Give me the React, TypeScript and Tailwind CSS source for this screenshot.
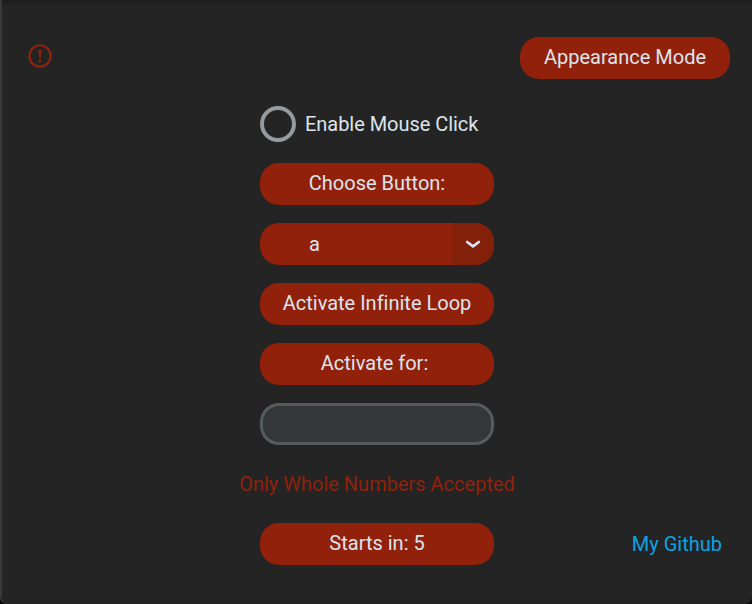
import React from "react";

const pill =
  "flex h-[42px] w-[234px] items-center justify-center rounded-[19px] bg-[#91210a] text-[#dce4ee]";

function PillButton({ children }: { children: React.ReactNode }) {
  return (
    <button type="button" className={pill}>
      <span className="-mt-0.5 whitespace-pre">{children}</span>
    </button>
  );
}

function WarningIcon() {
  return (
    <svg width="24" height="24" viewBox="0 0 24 24" fill="none" stroke="#9c230b">
      <circle cx="12" cy="12" r="10.6" strokeWidth="1.9" />
      <path d="M10.5 5.8h3l-.8 8.6h-1.4z" fill="#91210a" stroke="none" />
      <circle cx="12" cy="17.2" r="1.35" fill="#91210a" stroke="none" />
    </svg>
  );
}

export default function App() {
  return (
    <div className="h-[604px] w-[752px] overflow-hidden bg-[#080808]">
      <main className="flex h-full w-full justify-between rounded-b-[7px] border-l-2 border-[#3a3a3a] bg-[#242424] font-['Roboto',sans-serif] text-[20px] leading-6 text-[#dce4ee] shadow-[inset_0_4px_0_#1f1f1f] [font-variant-ligatures:none]">
        <aside className="w-[236px] pt-[44px] pl-[26px]">
          <WarningIcon />
        </aside>

        <section className="flex w-[278px] flex-col items-center gap-[18px] pt-[103px]">
          <label className="flex h-[42px] w-[234px] items-center gap-[9px] whitespace-nowrap">
            <span className="size-9 shrink-0 rounded-full border-4 border-[#949a9f]" />
            <span className="tracking-[-0.04px]">Enable Mouse Click</span>
          </label>
          <PillButton>Choose Button:</PillButton>
          <div className="flex h-[42px] w-[234px] items-center overflow-hidden rounded-[19px] bg-[#91210a]">
            <span className="w-[192px] pl-[49px]">a</span>
            <span className="flex h-full w-[42px] items-center justify-center bg-[#83200a]">
              <svg width="16" height="10" viewBox="0 0 16 10" fill="none">
                <path
                  d="M2.2 3 8 7.4 13.8 3"
                  stroke="#dce4ee"
                  strokeWidth="2.7"
                  strokeLinecap="round"
                  strokeLinejoin="round"
                />
              </svg>
            </span>
          </div>
          <PillButton>Activate Infinite Loop</PillButton>
          <PillButton>{"Activate for: "}</PillButton>
          <input
            type="text"
            aria-label="Duration"
            className="h-[42px] w-[234px] rounded-[19px] border-[3px] border-[#565b5e] bg-[#343638] px-4 outline-none"
          />
          <p className="flex h-[42px] items-center whitespace-nowrap text-[#91210a]">
            Only Whole Numbers Accepted
          </p>
          <PillButton>Starts in: 5</PillButton>
        </section>

        <aside className="flex w-[236px] flex-col items-end justify-between pt-[37px]">
          <button
            type="button"
            className="mr-[22px] flex h-[42px] w-[210px] items-center justify-center rounded-[19px] bg-[#91210a] text-[#dce4ee]"
          >
            <span className="-mt-0.5">Appearance Mode</span>
          </button>
          <a href="#github" className="mr-[30px] mb-[48px] text-[#0ca2e2]">
            My Github
          </a>
        </aside>
      </main>
    </div>
  );
}
